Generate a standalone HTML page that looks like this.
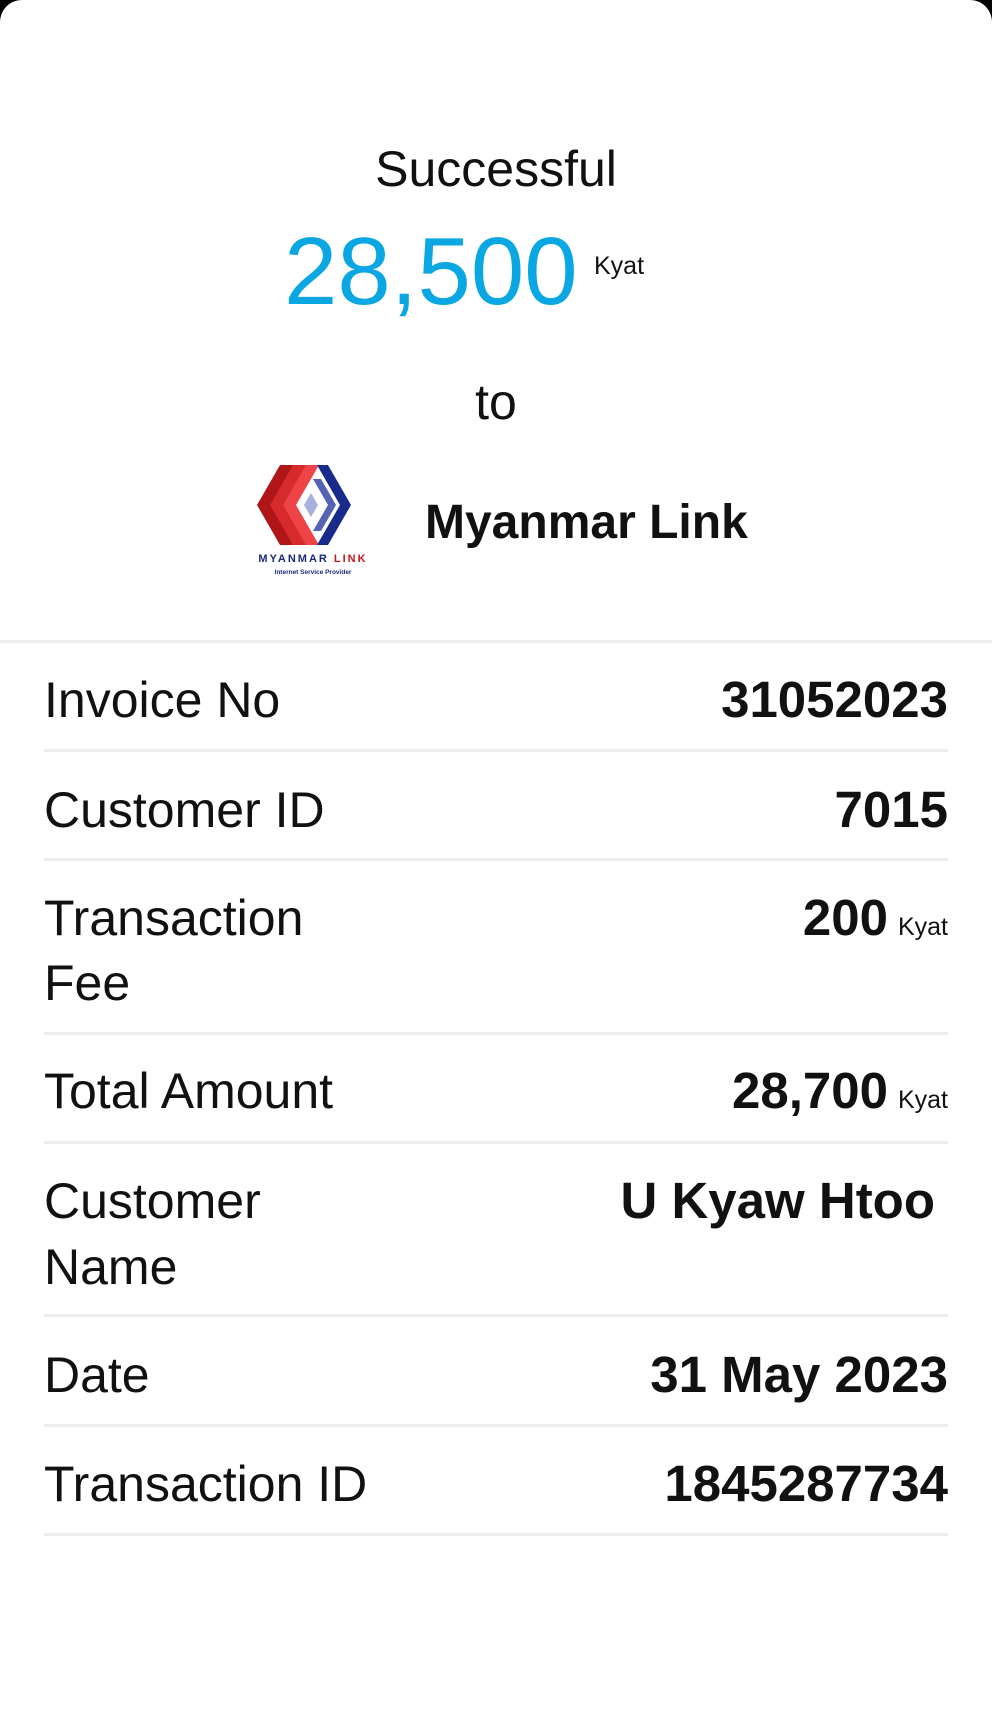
<!DOCTYPE html>
<html><head><meta charset="utf-8"><style>
html,body{margin:0;padding:0;background:#000;}
.card{position:relative;width:992px;height:1729px;background:#fff;border-radius:22px 22px 0 0;overflow:hidden;font-family:"Liberation Sans",Arial,sans-serif;color:#111;}
.t{position:absolute;white-space:nowrap;line-height:1;}
.sep{position:absolute;left:44px;width:904px;height:3px;background:#ececec;}
.l{left:44px;font-size:50px;}
.r{right:44px;font-size:51px;font-weight:bold;text-align:right;}
.k{font-size:25px;font-weight:normal;margin-left:10px;}
</style></head><body><div class="card">
<div class="t" style="left:0;width:992px;text-align:center;top:144px;font-size:50px;">Successful</div>
<div class="t" style="left:284px;top:224px;font-size:96px;color:#0aa7e2;">28,500</div>
<div class="t" style="left:594px;top:254px;font-size:25px;">Kyat</div>
<div class="t" style="left:0;width:992px;text-align:center;top:377px;font-size:50px;">to</div>
<svg style="position:absolute;left:251px;top:463px" width="124" height="112" viewBox="0 0 124 112">
<polygon points="29,2 45,2 22,42 45,82 29,82 6,42" fill="#b01518"/>
<polygon points="42,2 58,2 35,42 58,82 42,82 19,42" fill="#d62a2c"/>
<polygon points="55,2 68,2 45,42 68,82 55,82 32,42" fill="#ee4447"/>
<polygon points="66,2 77,2 100,42 77,82 66,82 89,42" fill="#1a2a8a"/>
<polygon points="62,16 70,16 85,42 70,68 62,68 77,42" fill="#5563b5"/>
<polygon points="60,30 67,42 60,54 53,42" fill="#a8b0dd"/>
<text x="62" y="99" text-anchor="middle" font-family="Liberation Sans,sans-serif" font-size="11" font-weight="bold" letter-spacing="2" fill="#1a2a7a">MYANMAR <tspan fill="#c8181c">LINK</tspan></text>
<text x="62" y="111" text-anchor="middle" font-family="Liberation Sans,sans-serif" font-size="6.5" font-weight="bold" fill="#1a2a7a">Internet Service Provider</text>
</svg>
<div class="t" style="left:425px;top:499px;font-size:48px;font-weight:bold;">Myanmar Link</div>
<div style="position:absolute;left:0;top:640px;width:992px;height:3px;background:#ececec;"></div>

<div class="t l" style="top:675px">Invoice No</div>
<div class="t r" style="top:674px">31052023</div>
<div class="sep" style="top:749px"></div>

<div class="t l" style="top:785px">Customer ID</div>
<div class="t r" style="top:784px">7015</div>
<div class="sep" style="top:858px"></div>

<div class="t l" style="top:893px">Transaction</div>
<div class="t l" style="top:958px">Fee</div>
<div class="t r" style="top:892px">200<span class="k">Kyat</span></div>
<div class="sep" style="top:1032px"></div>

<div class="t l" style="top:1066px">Total Amount</div>
<div class="t r" style="top:1065px">28,700<span class="k">Kyat</span></div>
<div class="sep" style="top:1141px"></div>

<div class="t l" style="top:1176px">Customer</div>
<div class="t l" style="top:1242px">Name</div>
<div class="t r" style="top:1175px;right:57px">U Kyaw Htoo</div>
<div class="sep" style="top:1314px"></div>

<div class="t l" style="top:1350px">Date</div>
<div class="t r" style="top:1349px">31 May 2023</div>
<div class="sep" style="top:1424px"></div>

<div class="t l" style="top:1459px">Transaction ID</div>
<div class="t r" style="top:1458px">1845287734</div>
<div class="sep" style="top:1533px"></div>
</div></body></html>
